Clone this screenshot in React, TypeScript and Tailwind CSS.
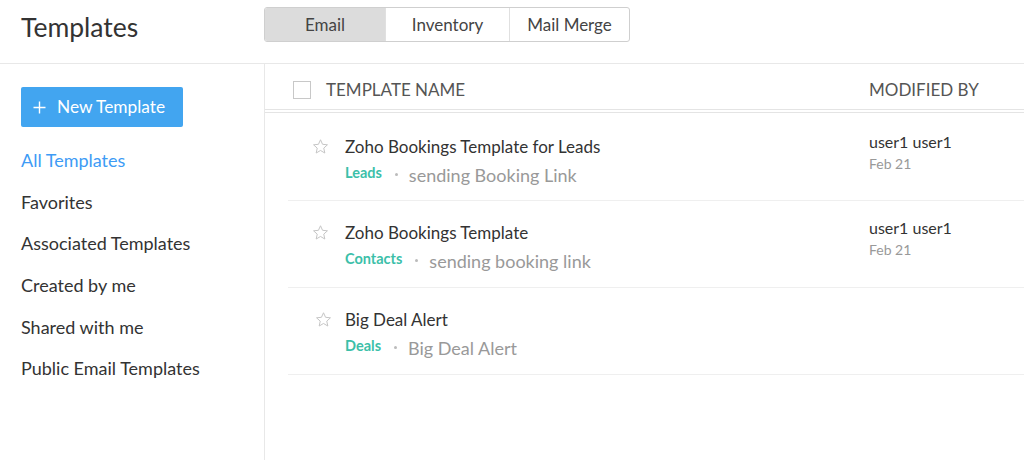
import React from "react";

const Star = () => (
  <svg width="17" height="17" viewBox="0 0 24 24" className="shrink-0">
    <polygon
      points="12,2.5 14.9,8.9 21.8,9.6 16.6,14.3 18.1,21.2 12,17.6 5.9,21.2 7.4,14.3 2.2,9.6 9.1,8.9"
      fill="none"
      stroke="#c4c4c4"
      strokeWidth="1.4"
      strokeLinejoin="round"
    />
  </svg>
);

type Row = { name: string; tag: string; desc: string; user?: string; date?: string; starPl: string; nameMl: string };

const rows: Row[] = [
  { name: "Zoho Bookings Template for Leads", tag: "Leads", desc: "sending Booking Link", user: "user1 user1", date: "Feb 21", starPl: "pl-[24px]", nameMl: "ml-[16px]" },
  { name: "Zoho Bookings Template", tag: "Contacts", desc: "sending booking link", user: "user1 user1", date: "Feb 21", starPl: "pl-[24px]", nameMl: "ml-[16px]" },
  { name: "Big Deal Alert", tag: "Deals", desc: "Big Deal Alert", starPl: "pl-[27px]", nameMl: "ml-[13px]" },
];

const navItems = [
  "All Templates",
  "Favorites",
  "Associated Templates",
  "Created by me",
  "Shared with me",
  "Public Email Templates",
];

export default function App() {
  return (
    <div className="w-[1024px] h-[460px] bg-white overflow-hidden text-[#333]" style={{ fontFamily: "Lato, 'Open Sans', sans-serif" }}>
      {/* Top bar */}
      <div className="h-[64px] border-b border-[#e8e8e8] flex">
        <div className="w-[264px] pl-[21px] pt-[10px]">
          <h1 className="text-[26.5px] leading-[34px] text-[#333]">Templates</h1>
        </div>
        <div className="pt-[7px]">
          <div className="flex h-[35px] border border-[#cfcfcf] rounded-[3px] overflow-hidden text-[17px] text-[#444]">
            <div className="w-[120px] bg-[#dcdcdc] flex items-center justify-center">Email</div>
            <div className="w-[124px] border-l border-[#e0e0e0] flex items-center justify-center">Inventory</div>
            <div className="w-[120px] border-l border-[#e0e0e0] flex items-center justify-center">Mail Merge</div>
          </div>
        </div>
      </div>

      <div className="flex h-[396px]">
        {/* Sidebar */}
        <div className="w-[265px] border-r border-[#e8e8e8] pl-[21px] pt-[23px]">
          <button className="w-[162px] h-[40px] rounded-[2px] bg-[#42a5f0] text-white text-[17.3px] flex items-center pl-[12px] gap-[11px]">
            <svg width="13" height="13" viewBox="0 0 13 13">
              <path d="M6.5 0.5v12M0.5 6.5h12" stroke="white" strokeWidth="1.4" />
            </svg>
            <span>New Template</span>
          </button>
          <div className="mt-[13px]">
            {navItems.map((n, i) => (
              <div
                key={n}
                className={`h-[41.6px] flex items-center text-[18px] ${i === 0 ? "text-[#3d9bf5]" : "text-[#333]"}`}
              >
                {n}
              </div>
            ))}
          </div>
        </div>

        {/* Main */}
        <div className="flex-1">
          <div className="h-[46px] border-b border-[#e4e4e4] flex items-center pt-[7px] pl-[28px] text-[17px] text-[#555]">
            <div className="flex-1 flex items-center">
              <div className="w-[18px] h-[18px] border-[1.5px] border-[#c8c8c8] bg-white" />
              <span className="ml-[15px]">TEMPLATE NAME</span>
            </div>
            <div className="w-[155px]">MODIFIED BY</div>
          </div>
          <div className="h-[3px] border-b border-[#e4e4e4]" />

          <div className="ml-[23px]">
            {rows.map((r, idx) => (
              <div key={r.name} className={`${idx === 0 ? "h-[88px] pt-[2px]" : "h-[87px]"} border-b border-[#efefef] flex`}>
                <div className={`flex-1 flex ${r.starPl} pt-[23px]`}>
                  <Star />
                  <div className={`${r.nameMl} -mt-[2px]`}>
                    <div className="text-[17px] leading-[21px] text-[#333]">{r.name}</div>
                    <div className="flex items-start mt-[7px]">
                      <span className="text-[14.5px] leading-[17px] font-bold text-[#3cbfa9]">{r.tag}</span>
                      <span className="ml-[13px] mt-[9px] w-[3px] h-[3px] rounded-full bg-[#bbb]" />
                      <span className="ml-[11px] mt-[-1px] text-[18px] leading-[24px] text-[#999]">{r.desc}</span>
                    </div>
                  </div>
                </div>
                <div className="w-[155px] pt-[17px]">
                  {r.user && <div className="text-[16px] leading-[20px] text-[#333]">{r.user}</div>}
                  {r.date && <div className="text-[14px] leading-[16px] text-[#999] mt-[4px]">{r.date}</div>}
                </div>
              </div>
            ))}
          </div>
        </div>
      </div>
    </div>
  );
}
